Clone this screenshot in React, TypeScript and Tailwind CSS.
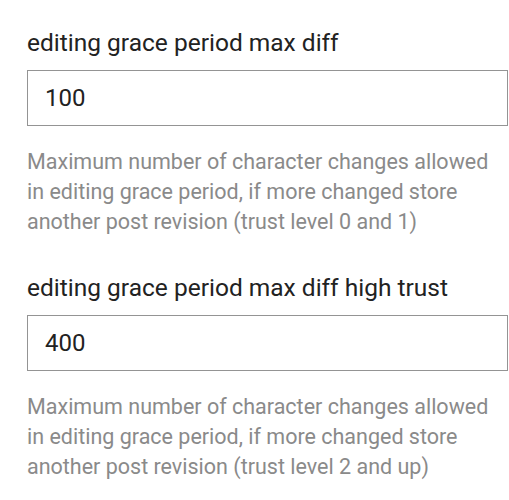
const settings = [
  {
    name: "editing grace period max diff",
    value: "100",
    help: "Maximum number of character changes allowed in editing grace period, if more changed store another post revision (trust level 0 and 1)",
  },
  {
    name: "editing grace period max diff high trust",
    value: "400",
    help: "Maximum number of character changes allowed in editing grace period, if more changed store another post revision (trust level 2 and up)",
  },
];

export default function App() {
  return (
    <div className="bg-white min-h-[500px] pl-[27px] pt-[28px] font-['Roboto',sans-serif] flex flex-col gap-[36px]">
      {settings.map((s) => (
        <div key={s.name} className="flex flex-col">
          <label className="text-[24.5px] leading-[30px] text-[#222]">{s.name}</label>
          <input
            readOnly
            value={s.value}
            className="mt-[12px] w-[481px] h-[56px] border-[1.5px] border-[#949494] px-[17px] text-[24px] text-[#222] outline-none"
          />
          <p className="mt-[21px] w-[472px] text-[21.5px] leading-[30px] text-[#8a8a8a]">{s.help}</p>
        </div>
      ))}
    </div>
  );
}
